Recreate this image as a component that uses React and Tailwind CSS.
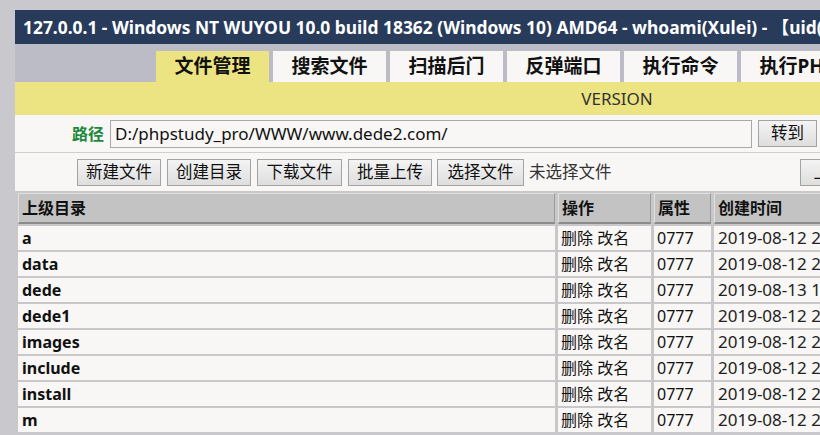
import React from "react";

const F = { fontFamily: '"Noto Sans", "Noto Sans CJK SC", sans-serif' };

const tabs = ["文件管理", "搜索文件", "扫描后门", "反弹端口", "执行命令", "执行PHP", "执行SQL"];
const rows = ["a", "data", "dede", "dede1", "images", "include", "install", "m"];
const dates = ["2019-08-12 20:31:10", "2019-08-12 20:31:10", "2019-08-13 15:02:11", "2019-08-12 20:31:10", "2019-08-12 20:31:10", "2019-08-12 20:31:10", "2019-08-12 20:31:10", "2019-08-12 20:31:10"];

function Btn({ children, className = "" }) {
  return (
    <div className={"h-[27px] flex items-center justify-center border border-[#a3a3a3] bg-gradient-to-b from-[#f4f4f4] to-[#dedede] text-[16.5px] text-[#111] whitespace-nowrap " + className}>
      {children}
    </div>
  );
}

export default function App() {
  return (
    <div className="w-[820px] h-[435px] overflow-hidden bg-[#c9c8cc] pt-[10px] pl-[15px]" style={F}>
      <div className="w-[1204px]">
        <div className="h-[34px] bg-[#283b5b] text-white font-bold text-[17.4px] flex items-center pl-[8px] whitespace-nowrap">
          127.0.0.1 - Windows NT WUYOU 10.0 build 18362 (Windows 10) AMD64 - whoami(Xulei) - 【uid(0) gid(0)】
        </div>
        <div className="h-[38px] bg-[#bcbcc6] flex items-end pl-[141px] gap-[4px]">
          {tabs.map((t, i) => (
            <div key={t} className={"w-[113px] h-[31px] flex items-center justify-center text-[19px] font-bold text-[#111] whitespace-nowrap " + (i === 0 ? "bg-[#ece482]" : "bg-[#f8f7f5]")}>
              {t}
            </div>
          ))}
        </div>
        <div className="h-[33px] bg-[#ece482] flex items-center justify-center text-[17px] text-[#333]">
          VERSION
        </div>
        <div className="bg-[#f8f7f5]">
          <div className="h-[37px] flex items-center">
            <div className="w-[95px] pr-[6px] text-right text-[16px] font-bold text-[#1d8a3e]">路径</div>
            <div className="w-[642px] h-[28px] border border-[#a8a8a8] bg-[#f8f7f5] flex items-center pl-[4px] text-[17px] text-[#111] whitespace-nowrap">
              D:/phpstudy_pro/WWW/www.dede2.com/
            </div>
            <Btn className="ml-[6px] w-[59px]">转到</Btn>
          </div>
          <div className="h-px bg-[#cfcfcf]" />
          <div className="h-[38px] flex items-center pl-[62px] gap-[6px]">
            <Btn className="w-[84px]">新建文件</Btn>
            <Btn className="w-[84px]">创建目录</Btn>
            <Btn className="w-[85px]">下载文件</Btn>
            <Btn className="w-[84px]">批量上传</Btn>
            <Btn className="w-[87px] ml-[-1px]">选择文件</Btn>
            <div className="w-[265px] text-[16.5px] text-[#333] -ml-[1px] whitespace-nowrap">未选择文件</div>
            <Btn className="w-[60px]">上传</Btn>
          </div>
          <div className="bg-[#c8c7c9] pl-[3px] pt-[2px] grid grid-cols-[537px_93px_57px_1fr] gap-x-[3px] gap-y-[2px]">
            {["上级目录", "操作", "属性", "创建时间"].map((h) => (
              <div key={h} className="h-[31px] bg-[#c3c3c3] border-t border-l border-[#e0e0e0] border-b-[2px] border-b-[#8c8c8c] border-r border-r-[#9a9a9a] flex items-center pl-[3px] text-[16px] font-bold text-[#111] whitespace-nowrap">
                {h}
              </div>
            ))}
            {rows.map((r, i) => (
              <React.Fragment key={r}>
                <div className="h-[24px] bg-[#f8f7f5] flex items-center pl-[4px] text-[16px] font-bold text-[#111]">{r}</div>
                <div className="h-[24px] bg-[#f8f7f5] flex items-center pl-[3px] text-[16px] text-[#111] whitespace-nowrap">删除 改名</div>
                <div className="h-[24px] bg-[#f8f7f5] flex items-center pl-[3px] text-[16px] text-[#111]">0777</div>
                <div className="h-[24px] bg-[#f8f7f5] flex items-center pl-[4px] text-[17px] text-[#222] whitespace-nowrap">{dates[i]}</div>
              </React.Fragment>
            ))}
          </div>
        </div>
      </div>
    </div>
  );
}
